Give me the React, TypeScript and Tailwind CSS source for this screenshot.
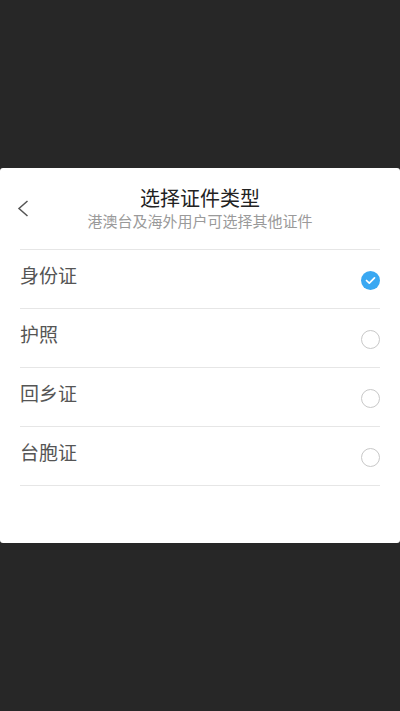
const options = ["身份证", "护照", "回乡证", "台胞证"]

const App = () => {
  const selected = 0

  return (
    <div className="min-h-[711px] w-[400px] bg-[#272727] flex items-center" style={{ fontFamily: '"Noto Sans CJK SC", "Noto Sans", sans-serif' }}>
      <div className="w-full bg-white rounded-[3px] pt-[17px] pb-[57px]">
        <div className="relative flex flex-col items-center">
          <button className="absolute left-[17px] top-[15px] w-[12px] h-[18px] flex items-center justify-center">
            <svg width="12" height="18" viewBox="0 0 12 18" fill="none">
              <path d="M10.5 1 L2 8.5 L10.5 16" stroke="#555" strokeWidth="1.5" />
            </svg>
          </button>
          <p className="text-[20px] leading-[26px] text-[#222]">选择证件类型</p>
          <p className="text-[15px] leading-[20px] text-[#9a9a9a]">港澳台及海外用户可选择其他证件</p>
        </div>

        <div className="mx-[20px] mt-[18px] border-t border-[#e6e6e6]">
          {options.map((label, i) => (
            <div key={label} className="h-[59px] flex items-center justify-between border-b border-[#e6e6e6]">
              <span className="text-[19px] leading-[26px] text-[#555] pb-[8px]">{label}</span>
              {i === selected ? (
                <span className="w-[19px] h-[19px] mt-[2px] rounded-full bg-[#3aa8f2] flex items-center justify-center">
                  <svg width="11" height="9" viewBox="0 0 11 9" fill="none">
                    <path d="M1.5 4.5 L4.3 7.2 L9.5 1.8" stroke="white" strokeWidth="1.7" strokeLinecap="round" strokeLinejoin="round" />
                  </svg>
                </span>
              ) : (
                <span className="w-[19px] h-[19px] mt-[2px] rounded-full border border-[#c8c8c8]" />
              )}
            </div>
          ))}
        </div>
      </div>
    </div>
  )
}

export default App
